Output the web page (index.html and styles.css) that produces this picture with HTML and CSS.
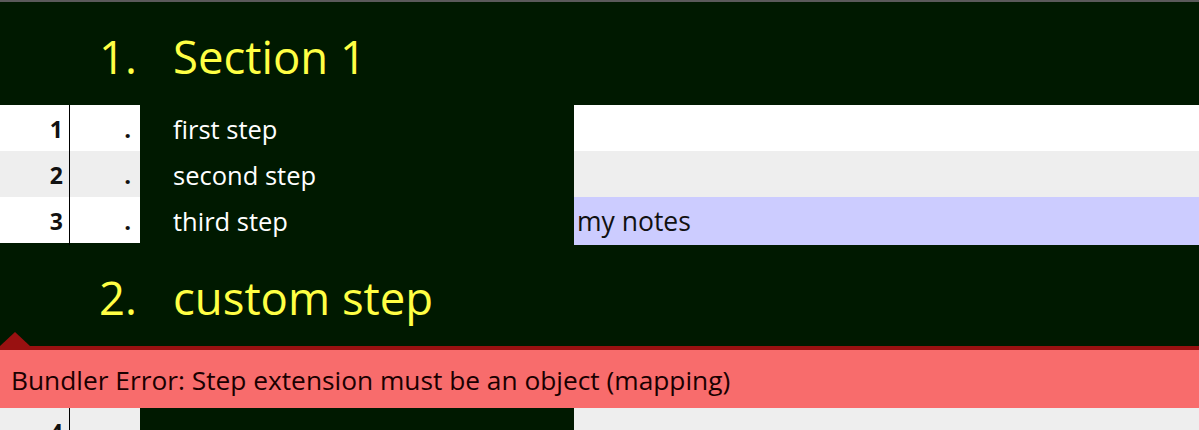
FILE: index.html
```html
<!DOCTYPE html>
<html>
<head>
<meta charset="utf-8">
<link rel="stylesheet" href="styles.css">
</head>
<body>
<div class="page">
  <h2 class="section-title"><span class="sec-num">1.</span><span class="sec-name">Section 1</span></h2>
  <div class="steps">
    <div class="row">
      <div class="cell-num">1</div>
      <div class="cell-dot">.</div>
      <div class="cell-step">first step</div>
      <div class="cell-notes"></div>
    </div>
    <div class="row alt">
      <div class="cell-num">2</div>
      <div class="cell-dot">.</div>
      <div class="cell-step">second step</div>
      <div class="cell-notes"></div>
    </div>
    <div class="row">
      <div class="cell-num">3</div>
      <div class="cell-dot">.</div>
      <div class="cell-step">third step</div>
      <div class="cell-notes has-note">my notes</div>
    </div>
  </div>
  <h2 class="section-title"><span class="sec-num">2.</span><span class="sec-name">custom step</span></h2>
  <div class="error-banner">Bundler Error: Step extension must be an object (mapping)</div>
  <div class="steps">
    <div class="row alt">
      <div class="cell-num">4</div>
      <div class="cell-dot">.</div>
      <div class="cell-step"></div>
      <div class="cell-notes"></div>
    </div>
  </div>
</div>
</body>
</html>
```

FILE: styles.css
```css
html, body {
  margin: 0;
  padding: 0;
}
body {
  background: #001900;
  border-top: 2px solid #5a5a5a;
  font-family: "Open Sans", "Noto Sans", sans-serif;
  overflow: hidden;
  height: 428px;
}
.section-title {
  margin: 0;
  height: 103px;
  display: flex;
  align-items: flex-start;
  color: #ffff44;
  font-weight: 400;
  font-size: 45.5px;
  line-height: 1;
  padding-top: 32px;
  box-sizing: border-box;
}
.sec-num {
  width: 74px;
  margin-left: 99px;
}
.steps {
  display: flex;
  flex-direction: column;
}
.row {
  display: grid;
  grid-template-columns: 70px 70px 434px 1fr;
  height: 46px;
  background: #ffffff;
}
.row.alt {
  background: #eeeeee;
}
.cell-num {
  border-right: 1px solid #000;
  text-align: right;
  padding-right: 6px;
  font-weight: 700;
  font-size: 23px;
  line-height: 48px;
  color: #111;
}
.cell-dot {
  text-align: right;
  padding-right: 9px;
  font-weight: 700;
  font-size: 24px;
  line-height: 48px;
  color: #111;
}
.cell-step {
  background: #001900;
  color: #ffffff;
  font-size: 25.5px;
  line-height: 48px;
  padding-left: 33px;
}
.cell-notes {
  font-size: 26.5px;
  line-height: 48px;
  color: #111;
}
.cell-notes.has-note {
  background: #ccccff;
  padding-left: 3px;
}
.error-banner {
  position: relative;
  background: #f86c6c;
  border-top: 4px solid #991111;
  height: 58px;
  box-sizing: content-box;
  font-size: 26.3px;
  line-height: 60px;
  color: #1a0000;
  padding-left: 11px;
}
.error-banner::before {
  content: "";
  position: absolute;
  left: 0;
  top: -18px;
  border-left: 15px solid transparent;
  border-right: 15px solid transparent;
  border-bottom: 14px solid #991111;
}
```
